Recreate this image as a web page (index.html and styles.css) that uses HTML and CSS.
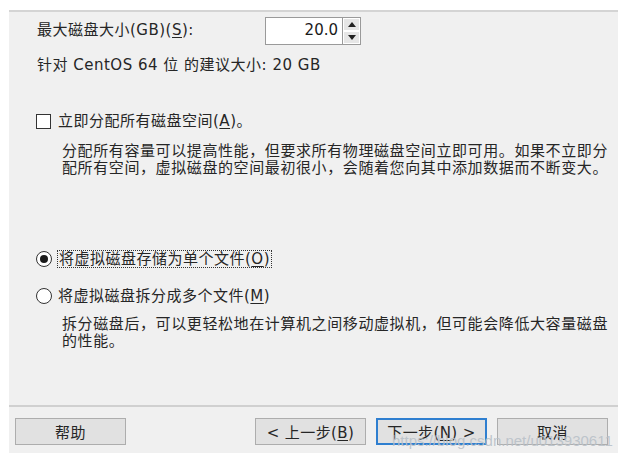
FILE: index.html
```html
<!DOCTYPE html>
<html lang="zh-CN">
<head>
<meta charset="utf-8">
<title>指定磁盘容量</title>
<link rel="stylesheet" href="styles.css">
</head>
<body>
<div class="panel">
  <div class="content">
    <div class="size-row">
      <label class="size-label">最大磁盘大小(GB)(<u>S</u>):</label>
      <div class="spin">
        <div class="spin-input">20.0</div>
        <div class="spin-btns">
          <div class="spin-btn"><span class="tri-up"></span></div>
          <div class="spin-btn"><span class="tri-down"></span></div>
        </div>
      </div>
    </div>
    <div class="hint">针对 CentOS 64 位 的建议大小: 20 GB</div>

    <div class="option check-row">
      <span class="checkbox"></span>
      <span class="opt-label">立即分配所有磁盘空间(<u>A</u>)。</span>
    </div>
    <p class="desc desc-a">分配所有容量可以提高性能，但要求所有物理磁盘空间立即可用。如果不立即分配所有空间，虚拟磁盘的空间最初很小，会随着您向其中添加数据而不断变大。</p>

    <div class="option radio-row radio-first">
      <span class="radio checked"><span class="dot"></span></span>
      <span class="opt-label focus">将虚拟磁盘存储为单个文件(<u>O</u>)</span>
    </div>
    <div class="option radio-row radio-second">
      <span class="radio"></span>
      <span class="opt-label">将虚拟磁盘拆分成多个文件(<u>M</u>)</span>
    </div>
    <p class="desc desc-b">拆分磁盘后，可以更轻松地在计算机之间移动虚拟机，但可能会降低大容量磁盘的性能。</p>
  </div>

  <div class="footer">
    <button class="btn">帮助</button>
    <div class="nav">
      <button class="btn">&lt; 上一步(<u>B</u>)</button>
      <button class="btn default">下一步(<u>N</u>) &gt;</button>
      <button class="btn">取消</button>
    </div>
    <div class="watermark">https://blog.csdn.net/u013930611</div>
  </div>
</div>
</body>
</html>
```
FILE: styles.css
```css
html, body {
  margin: 0;
  padding: 0;
  background: #ffffff;
}

body {
  width: 626px;
  height: 457px;
  overflow: hidden;
  font-family: "DejaVu Sans", "Noto Sans CJK SC", sans-serif;
  font-size: 15px;
  color: #262626;
}

.panel {
  margin: 10px 8px 0 9px;
  height: 443px;
  background: #f0f0f0;
  border-top: 2px solid #d4d4d4;
  box-sizing: border-box;
  display: flex;
  flex-direction: column;
  position: relative;
}

.content {
  flex: 1;
  padding: 5px 0 0 28px;
}

u {
  text-decoration: underline;
  text-underline-offset: 2px;
}

.size-row {
  display: flex;
  align-items: center;
  height: 28px;
}

.size-label {
  width: 228px;
  letter-spacing: 0.5px;
  line-height: 18px;
  margin-top: -3px;
}

.spin {
  display: flex;
  height: 28px;
}

.spin-input {
  width: 77px;
  height: 28px;
  box-sizing: border-box;
  background: #ffffff;
  border: 1px solid #9a9a9a;
  border-right: none;
  text-align: right;
  padding-right: 4px;
  line-height: 24px;
  font-size: 15px;
  color: #1a1a1a;
}

.spin-btns {
  display: flex;
  flex-direction: column;
  width: 19px;
  height: 28px;
  box-sizing: border-box;
  border: 1px solid #9a9a9a;
  background: #ffffff;
}

.spin-btn {
  flex: 1;
  display: flex;
  align-items: center;
  justify-content: center;
  background: #e6e6e6;
  margin: 1px;
}

.tri-up {
  width: 0;
  height: 0;
  border-left: 4px solid transparent;
  border-right: 4px solid transparent;
  border-bottom: 5px solid #222;
}

.tri-down {
  width: 0;
  height: 0;
  border-left: 4px solid transparent;
  border-right: 4px solid transparent;
  border-top: 5px solid #222;
}

.hint {
  margin-top: 11px;
  line-height: 18px;
  letter-spacing: 0.5px;
}

.option {
  display: flex;
  align-items: center;
  height: 18px;
  margin-left: -1px;
}

.check-row {
  margin-top: 38px;
}

.checkbox {
  width: 15px;
  height: 15px;
  box-sizing: border-box;
  border: 1px solid #333;
  background: #ffffff;
  margin-right: 6px;
}

.radio {
  width: 16px;
  height: 16px;
  box-sizing: border-box;
  border: 1px solid #333;
  border-radius: 50%;
  background: #ffffff;
  margin-right: 5px;
  display: flex;
  align-items: center;
  justify-content: center;
}

.radio .dot {
  width: 8px;
  height: 8px;
  border-radius: 50%;
  background: #1a1a1a;
}

.opt-label {
  letter-spacing: 0.5px;
  line-height: 16px;
  padding: 0 1px;
}

.opt-label.focus {
  border: 1px dotted #333;
}

.desc {
  margin: 0;
  padding: 0 8px 0 25px;
  line-height: 17px;
  letter-spacing: 0.6px;
  color: #262626;
}

.desc-a {
  margin-top: 13px;
}

.radio-first {
  margin-top: 73px;
}

.radio-second {
  margin-top: 19px;
}

.desc-b {
  margin-top: 11px;
}

.footer {
  border-top: 2px solid #d0d0d0;
  padding: 11px 10px 8px 6px;
  display: flex;
  justify-content: space-between;
  position: relative;
}

.nav {
  display: flex;
  gap: 10px;
}

.btn {
  width: 111px;
  height: 27px;
  box-sizing: border-box;
  background: #e1e1e1;
  border: 1px solid #adadad;
  font-family: "DejaVu Sans", "Noto Sans CJK SC", sans-serif;
  font-size: 15px;
  color: #262626;
  padding: 0;
  letter-spacing: 0.4px;
}

.btn.default {
  border: 2px solid #2f7fd0;
}

.watermark {
  position: absolute;
  left: 383px;
  top: 25px;
  font-family: "Liberation Sans", Arial, sans-serif;
  font-size: 15px;
  color: rgba(184, 192, 200, 0.9);
  white-space: nowrap;
  pointer-events: none;
}
```
